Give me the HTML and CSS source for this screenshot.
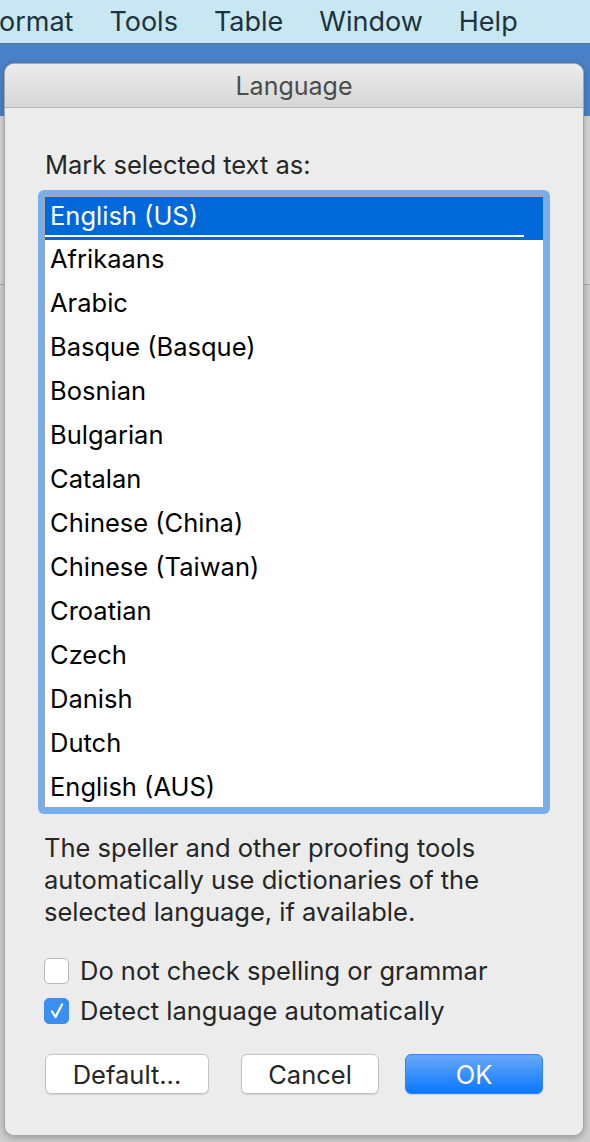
FILE: index.html
```html
<!DOCTYPE html>
<html lang="en">
<head>
  <meta charset="UTF-8" />
  <title>Language</title>
  <link rel="stylesheet" href="styles.css">
</head>
<body>

  <div class="menubar">
    <span class="menu-item first">ormat</span>
    <span class="menu-item">Tools</span>
    <span class="menu-item">Table</span>
    <span class="menu-item">Window</span>
    <span class="menu-item">Help</span>
  </div>

  <div class="desk">
    <div class="dialog">
      <div class="titlebar">Language</div>

      <div class="content">
        <div class="label">Mark selected text as:</div>

        <div class="list-ring">
          <div class="list">
            <div class="row selected">English (US)</div>
            <div class="row">Afrikaans</div>
            <div class="row">Arabic</div>
            <div class="row">Basque (Basque)</div>
            <div class="row">Bosnian</div>
            <div class="row">Bulgarian</div>
            <div class="row">Catalan</div>
            <div class="row">Chinese (China)</div>
            <div class="row">Chinese (Taiwan)</div>
            <div class="row">Croatian</div>
            <div class="row">Czech</div>
            <div class="row">Danish</div>
            <div class="row">Dutch</div>
            <div class="row">English (AUS)</div>
          </div>
        </div>

        <p class="note">The speller and other proofing tools automatically use dictionaries of the selected language, if available.</p>

        <div class="checks">
          <label class="check">
            <span class="box"></span>
            Do not check spelling or grammar
          </label>
          <label class="check">
            <span class="box checked">
              <svg width="16" height="18" viewBox="0 0 16 18"><path d="M3 9.5 L6.5 15 L13 2.5" fill="none" stroke="#fff" stroke-width="2.3" stroke-linecap="round" stroke-linejoin="round"/></svg>
            </span>
            Detect language automatically
          </label>
        </div>

        <div class="buttons">
          <button class="btn btn-default">Default...</button>
          <button class="btn btn-cancel">Cancel</button>
          <button class="btn btn-ok">OK</button>
        </div>
      </div>
    </div>
  </div>

</body>
</html>
```

FILE: styles.css
```css
body {
  margin: 0;
  width: 590px;
  height: 1142px;
  overflow: hidden;
  font-family: 'Inter', 'Noto Sans', sans-serif;
  background: #bdbdbd;
  color: #1a1a1a;
}

.menubar {
  height: 43px;
  border-bottom: 1px solid #5f7480;
  background: #c8e7f2;
  display: flex;
  align-items: center;
  gap: 36px;
  font-size: 27px;
  color: #1d3340;
  white-space: nowrap;
}

.menu-item.first {
  margin-left: -1px;
}

.desk {
  height: 1098px;
  padding: 19px 6px 0 4px;
  box-sizing: border-box;
  background:
    linear-gradient(#4a80c8 0, #4a80c8 72px, #d4d4d4 72px, #d4d4d4 240px, #a9a9a9 240px, #a9a9a9 241px, #cdcdcd 241px);
}

.dialog {
  height: 1073px;
  background: #ececec;
  border: 1px solid #a6a6a6;
  border-radius: 10px;
  box-shadow: 0 2px 6px rgba(0, 0, 0, 0.25);
  overflow: hidden;
  box-sizing: border-box;
}

.titlebar {
  height: 43px;
  line-height: 45px;
  border-bottom: 1px solid #b4b4b4;
  background: linear-gradient(#ececec, #d6d6d6);
  text-align: center;
  font-size: 25px;
  color: #4b4b4b;
}

.content {
  padding: 0 33px 0 33px;
}

.label {
  margin-top: 43px;
  margin-left: 7px;
  font-size: 25.5px;
  line-height: 28px;
  color: #262626;
}

.list-ring {
  margin-top: 11px;
  padding: 6px;
  background: #79aeea;
  border-radius: 6px;
}

.list {
  height: 610px;
  background: #fff;
  border: 1px solid #a4a4a4;
  overflow: hidden;
}

.row {
  height: 44px;
  line-height: 38px;
  padding-left: 5px;
  font-size: 25.5px;
  color: #000;
  white-space: nowrap;
}

.row.selected {
  position: relative;
  height: 43px;
  background: #0068d9;
  color: #fff;
}

.row.selected::after {
  content: "";
  position: absolute;
  left: 0;
  bottom: 3px;
  width: 479px;
  height: 2px;
  background: #fff;
}

.note {
  margin: 18px 0 0 6px;
  font-size: 25.5px;
  line-height: 32px;
  color: #262626;
}

.checks {
  margin-top: 29px;
  margin-left: 6px;
  display: flex;
  flex-direction: column;
  gap: 13px;
}

.check {
  display: flex;
  align-items: center;
  gap: 11px;
  font-size: 25.5px;
  line-height: 27px;
  color: #262626;
}

.box {
  width: 25px;
  height: 26px;
  box-sizing: border-box;
  border: 1px solid #b9b9b9;
  border-radius: 5px;
  background: #fff;
  display: flex;
  align-items: center;
  justify-content: center;
}

.box.checked {
  border-color: #3b8def;
  background: #3b8ff3;
}

.buttons {
  margin-top: 30px;
  margin-left: 7px;
  display: flex;
}

.btn {
  height: 40px;
  font-family: inherit;
  font-size: 25.5px;
  border-radius: 6px;
  padding: 0;
  color: #262626;
  background: #fff;
  border: 1px solid #c4c4c4;
  box-shadow: 0 1px 1px rgba(0, 0, 0, 0.12);
}

.btn-default {
  width: 164px;
}

.btn-cancel {
  width: 138px;
  margin-left: 32px;
}

.btn-ok {
  width: 138px;
  margin-left: 26px;
  color: #fff;
  border: 1px solid #2f86f2;
  background: linear-gradient(#67a9f8, #0a78fe);
}
```
